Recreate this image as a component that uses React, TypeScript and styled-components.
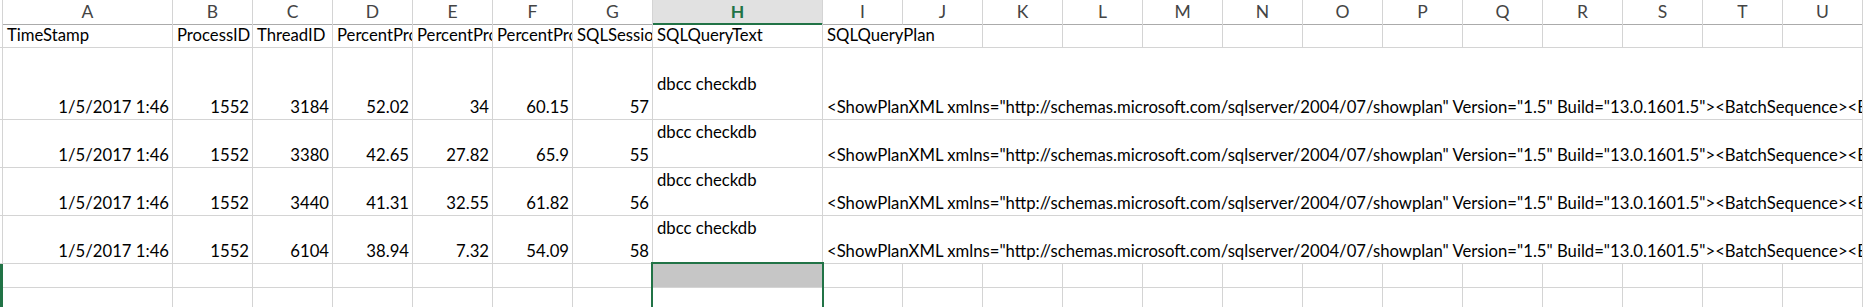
import React from 'react'
import styled, { createGlobalStyle } from 'styled-components'

const GRID = '#d4d4d4'
const GREEN = '#217346'
const COLS = '3px 170px repeat(6, 80px) 170px repeat(13, 80px) 1px'

const GlobalStyle = createGlobalStyle`
  html, body {
    margin: 0;
    padding: 0;
    background: #ffffff;
    overflow: hidden;
  }
  body {
    font-family: Lato, 'Open Sans', sans-serif;
    color: #000000;
  }
`

const Sheet = styled.div`
  position: relative;
  width: 1864px;
  height: 307px;
  overflow: hidden;
  font-size: 16.7px;
`

const Row = styled.div<{ $h: number }>`
  display: grid;
  grid-template-columns: ${COLS};
  height: ${(p) => p.$h}px;
`

const RowHead = styled.div<{ $sel?: boolean }>`
  box-sizing: border-box;
  border-right: 1px solid ${(p) => (p.$sel ? GREEN : GRID)};
  border-bottom: 1px solid ${(p) => (p.$sel ? GREEN : GRID)};
  background: ${(p) => (p.$sel ? GREEN : '#ffffff')};
`

const ColHead = styled.div<{ $active?: boolean }>`
  box-sizing: border-box;
  display: flex;
  justify-content: center;
  align-items: flex-start;
  line-height: 23px;
  font-size: 17.5px;
  border-right: 1px solid ${GRID};
  border-bottom: ${(p) => (p.$active ? `2px solid ${GREEN}` : '1px solid #ababab')};
  background: ${(p) => (p.$active ? '#e1e1e1' : '#ffffff')};
  color: ${(p) => (p.$active ? GREEN : '#444444')};
  font-weight: ${(p) => (p.$active ? 700 : 400)};
`

const Cell = styled.div<{ $span?: number; $right?: boolean; $fill?: string }>`
  box-sizing: border-box;
  grid-column: span ${(p) => p.$span ?? 1};
  display: flex;
  flex-direction: column;
  justify-content: flex-end;
  align-items: ${(p) => (p.$right ? 'flex-end' : 'flex-start')};
  padding: 0 3px 2px 4px;
  line-height: 20px;
  white-space: nowrap;
  overflow: hidden;
  border-right: 1px solid ${GRID};
  border-bottom: 1px solid ${GRID};
  background: ${(p) => p.$fill ?? 'transparent'};
`

const Wrapped = styled.div`
  line-height: 23px;
  margin-bottom: -1px;
`

const Selection = styled.div`
  position: absolute;
  left: 651px;
  top: 262px;
  width: 173px;
  height: 80px;
  box-sizing: border-box;
  border: 2px solid ${GREEN};
  pointer-events: none;
`

const letters = 'ABCDEFGHIJKLMNOPQRSTU'.split('')

const headers = [
  'TimeStamp',
  'ProcessID',
  'ThreadID',
  'PercentProcessorTime',
  'PercentProcessorUserTime',
  'PercentProcessorPrivTime',
  'SQLSessionID',
  'SQLQueryText',
]

const plan =
  '<ShowPlanXML xmlns="http://schemas.microsoft.com/sqlserver/2004/07/showplan" Version="1.5" Build="13.0.1601.5"><BatchSequence><Batch><Statements><StmtSimple StatementText="dbcc checkdb"'

const data = [
  { h: 72, v: ['1/5/2017 1:46', '1552', '3184', '52.02', '34', '60.15', '57'] },
  { h: 48, v: ['1/5/2017 1:46', '1552', '3380', '42.65', '27.82', '65.9', '55'] },
  { h: 48, v: ['1/5/2017 1:46', '1552', '3440', '41.31', '32.55', '61.82', '56'] },
  { h: 48, v: ['1/5/2017 1:46', '1552', '6104', '38.94', '7.32', '54.09', '58'] },
]

const Blanks = ({ n }: { n: number }) => (
  <>
    {Array.from({ length: n }, (_, i) => (
      <Cell key={i} />
    ))}
  </>
)

const App = () => {
  return (
    <>
      <GlobalStyle />
      <Sheet>
        <Row $h={24}>
          <RowHead />
          {letters.map((l) => (
            <ColHead key={l} $active={l === 'H'}>
              {l}
            </ColHead>
          ))}
        </Row>

        <Row $h={24}>
          <RowHead />
          {headers.map((t) => (
            <Cell key={t}>{t}</Cell>
          ))}
          <Cell $span={2}>SQLQueryPlan</Cell>
          <Blanks n={11} />
        </Row>

        {data.map((r, i) => (
          <Row key={i} $h={r.h}>
            <RowHead />
            {r.v.map((v, j) => (
              <Cell key={j} $right>
                {v}
              </Cell>
            ))}
            <Cell>
              <Wrapped>dbcc checkdb</Wrapped>
              <Wrapped>&nbsp;</Wrapped>
            </Cell>
            <Cell $span={13}>{plan}</Cell>
          </Row>
        ))}

        <Row $h={24}>
          <RowHead $sel />
          <Blanks n={7} />
          <Cell $fill="#c6c6c6" />
          <Blanks n={13} />
        </Row>
        <Row $h={24}>
          <RowHead $sel />
          <Blanks n={21} />
        </Row>

        <Selection />
      </Sheet>
    </>
  )
}

export default App
